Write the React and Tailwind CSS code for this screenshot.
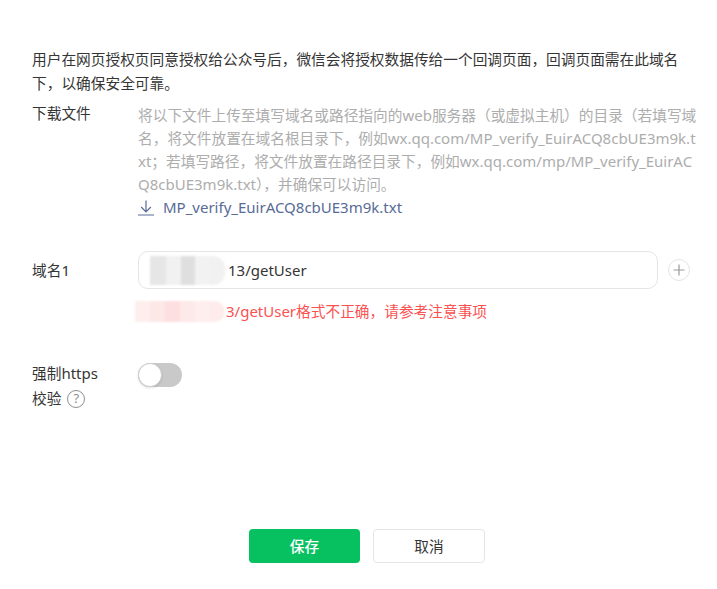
const FONT = { fontFamily: '"Noto Sans", "Noto Sans CJK SC", sans-serif' };

function L({ children }) {
  return <span className="text-[15px]">{children}</span>;
}

function Patch({ cells, h, className = "" }) {
  return (
    <span className={"flex overflow-hidden rounded-r-xl shrink-0 blur-[1px] " + className} style={{ height: h }}>
      {cells.map((c, i) => (
        <span key={i} style={{ width: c[0], background: c[1] }} className="block h-full" />
      ))}
    </span>
  );
}

export default function App() {
  return (
    <div className="w-[717px] h-[589px] bg-white overflow-hidden pt-[47px] pl-8 text-[14.7px] text-[#353535] flex flex-col" style={FONT}>
      <p className="w-[655px] leading-6 m-0">
        用户在网页授权页同意授权给公众号后，微信会将授权数据传给一个回调页面，回调页面需在此域名下，以确保安全可靠。
      </p>

      <div className="flex mt-[6px]">
        <div className="w-[106px] shrink-0 leading-6">下载文件</div>
        <div className="w-[560px] mt-[3px]">
          <p className="m-0 leading-[23px] text-[#adadad] break-all">
            将以下文件上传至填写域名或路径指向的<L>web</L>服务器（或虚拟主机）的目录（若填写域名，将文件放置在域名根目录下，例如<L>wx.qq.com/MP_verify_EuirACQ8cbUE3m9k.txt</L>；若填写路径，将文件放置在路径目录下，例如<L>wx.qq.com/mp/MP_verify_EuirACQ8cbUE3m9k.txt</L>），并确保可以访问。
          </p>
          <div className="flex items-center leading-[23px] text-[#576b95]">
            <svg width="16" height="16" viewBox="0 0 16 16" fill="none" stroke="#576b95" strokeWidth="1.2" className="mr-[9px]">
              <path d="M8 0.5v11M3.2 7l4.8 4.8L12.8 7M0 15h16" />
            </svg>
            <L>MP_verify_EuirACQ8cbUE3m9k.txt</L>
          </div>
        </div>
      </div>

      <div className="flex items-center mt-[32px]">
        <div className="w-[106px] shrink-0">域名<L>1</L></div>
        <div className="w-[520px] h-[38px] border border-[#e5e5e5] rounded-[10px] flex items-center pl-[11px] text-[#353535]">
          <Patch
            h={29}
            cells={[[16, "#e6e6e6"], [15, "#f1f1f1"], [14, "#dfdfdf"], [15, "#f2f2f2"], [15, "#f1f1f1"]]}
            className="mr-[3px]"
          />
          <L>13/getUser</L>
        </div>
        <span className="ml-[10px] w-[22px] h-[22px] rounded-full border border-[#e5e5e5] flex items-center justify-center">
          <svg width="12" height="12" viewBox="0 0 12 12" stroke="#999" strokeWidth="1.2">
            <path d="M6 0.5v11M0.5 6h11" />
          </svg>
        </span>
      </div>

      <div className="flex items-center mt-[10px] ml-[103px] text-[#fa5151] leading-6">
        <Patch
          h={21}
          cells={[[15, "#feeeee"], [15, "#fde7e7"], [15, "#fddfdf"], [15, "#fde9e9"], [15, "#feeeee"], [15, "#feecec"]]}
          className="mr-[1px]"
        />
        <span><L>3/getUser</L>格式不正确，请参考注意事项</span>
      </div>

      <div className="flex mt-[40px]">
        <div className="w-[106px] shrink-0 leading-[25px] -mt-[2px]">
          <div>强制<L>https</L></div>
          <div className="flex items-center">
            校验
            <span className="ml-[6px] w-[18px] h-[18px] rounded-full border border-[#8f8f8f] text-[#8f8f8f] text-[13px] leading-none flex items-center justify-center">?</span>
          </div>
        </div>
        <div className="w-[44px] h-6 rounded-full bg-[#c9c9c9] flex items-center">
          <span className="w-[24px] h-[24px] rounded-full bg-white border border-[#cfcfcf] shadow-sm" />
        </div>
      </div>

      <div className="flex mt-[118px] ml-[217px] gap-[13px]">
        <button className="w-[111px] h-[34px] rounded-[4px] bg-[#07c160] text-white font-medium">保存</button>
        <button className="w-[112px] h-[34px] rounded-[4px] bg-white border border-[#e5e5e5] text-[#353535]">取消</button>
      </div>
    </div>
  );
}
